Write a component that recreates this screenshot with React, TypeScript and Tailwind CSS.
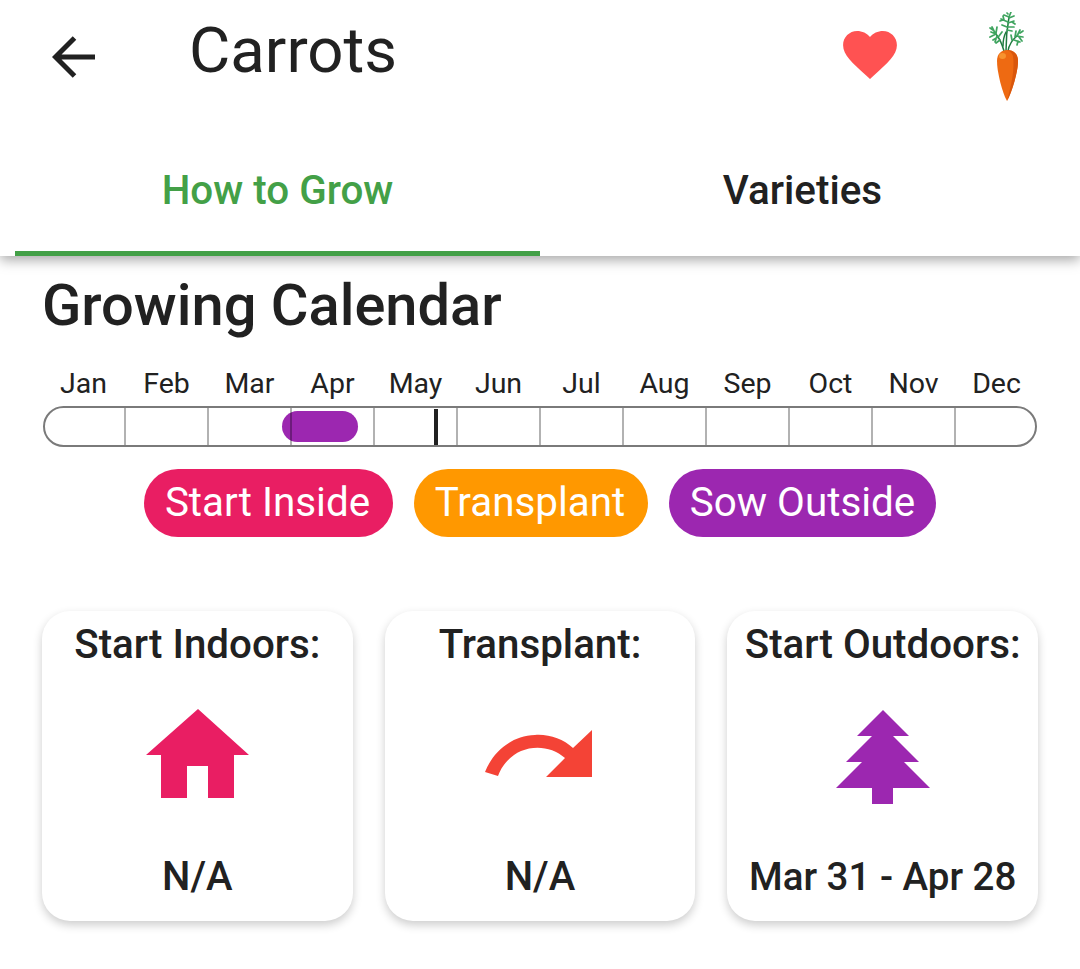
const months = ["Jan", "Feb", "Mar", "Apr", "May", "Jun", "Jul", "Aug", "Sep", "Oct", "Nov", "Dec"];

const CarrotIcon = () => (
  <svg width="36" height="90" viewBox="0 0 36 90" fill="none">
    {/* leaves */}
    <g stroke="#1f7a3f" strokeWidth="1.5" strokeLinecap="round">
      <path d="M15 39 C13 32 11 27 7 22" />
      <path d="M17 39 C17 28 18 16 20 5" />
      <path d="M19 39 C20 33 23 28 28 24" />
      <path d="M14 34 C14 28 15 24 17 20" />
    </g>
    <g stroke="#3fa45f" strokeWidth="1.7" strokeLinecap="round">
      <path d="M7 22 L1 25 M9 25 L4 28 M7 22 L2 20 M8 24 L6 30 M11 28 L7 31 M6 21 L3 15 M7 21 L8 15 M4 18 L1 16 M10 24 L13 20" />
      <path d="M20 5 L15 3 M20 5 L22 0 M20 6 L25 4 M19 10 L12 7 M14 8 L11 9 M15 8 L14 4 M19 11 L25 9 M23 10 L26 12 M18 15 L13 13 M19 15 L25 15 M18 18 L23 19 M19 2 L18 1" />
      <path d="M28 24 L34 25 M28 24 L31 18 M26 25 L27 19 M31 21 L34 19 M25 28 L31 30 M29 29 L28 33 M30 25 L33 29 M23 28 L22 23" />
    </g>
    {/* root */}
    <path d="M18 38 C25 38 29 42 29 49 C29 60 23 80 18 89 C13 80 8 60 8 49 C8 42 12 38 18 38 Z" fill="#ee6a12" />
    <path d="M18 38 C25 38 29 42 29 49 C29 60 23 80 18 89 C22 74 26 58 24 44 C23 41 21 39 18 38 Z" fill="#d9570d" />
    <ellipse cx="13.5" cy="44" rx="3.5" ry="3" fill="#f7932f" />
  </svg>
);

const HouseIcon = () => (
  <svg width="104" height="90" viewBox="0 0 104 90" className="mb-[6px] ml-[1px]">
    <path d="M52 0 L103 46 L88 46 L88 89 L62 89 L62 57 L41 57 L41 89 L15 89 L15 46 L0 46 Z" fill="#e91e63" />
  </svg>
);

const ArrowIcon = () => (
  <svg width="108" height="48" viewBox="0 0 108 48" className="mb-[7px] -ml-[1px]">
    <path d="M107 0 V47 H61 L80 28 C68 17 50 15 36 21 C25 26 17 35 13 46 L0 42 C7 24 24 6 50 5 C64 4 78 9 88 18 Z" fill="#f44336" />
  </svg>
);

const TreeIcon = () => (
  <svg width="94" height="94" viewBox="0 0 94 94">
    <path d="M47 0 L73 26 L57 26 L83 52 L68 52 L94 78 L57 78 L57 94 L36 94 L36 78 L0 78 L26 52 L10 52 L36 26 L21 26 Z" fill="#9c27b0" />
  </svg>
);

const cards = [
  { title: "Start Indoors:", icon: <HouseIcon />, date: "N/A", dateSize: "text-[40px]" },
  { title: "Transplant:", icon: <ArrowIcon />, date: "N/A", dateSize: "text-[40px]" },
  { title: "Start Outdoors:", icon: <TreeIcon />, date: "Mar 31 - Apr 28", dateSize: "text-[38.5px]" },
];

export default function App() {
  return (
    <div className="w-[1080px] h-[969px] bg-white overflow-hidden text-[#212121] font-['Roboto',sans-serif]">
      {/* App bar + tabs */}
      <header className="relative z-10 h-[256px] shadow-[0_4px_12px_rgba(0,0,0,0.35)] bg-white">
        <div className="flex items-center h-[102px] pl-[52px] pr-[55px]">
          <svg width="44" height="42" viewBox="0 0 44 42" fill="none" className="mt-[12px]">
            <path d="M43 21 H4 M22.5 2 L3.5 21 L22.5 40" stroke="#212121" strokeWidth="5" />
          </svg>
          <h1 className="ml-[93px] text-[63.5px] leading-none flex-1">Carrots</h1>
          <svg width="54" height="48" viewBox="0 0 24 21.4" className="mr-[92px] mt-[8px]">
            <path d="M12 21.4 L10.3 19.8 C4.1 14.2 0 10.5 0 6.3 C0 2.8 2.8 0 6.3 0 C8.4 0 10.7 1 12 2.7 C13.3 1 15.6 0 17.7 0 C21.2 0 24 2.8 24 6.3 C24 10.5 19.9 14.2 13.7 19.8 Z" fill="#ff5252" />
          </svg>
          <div className="mt-[11px]">
            <CarrotIcon />
          </div>
        </div>
        <div className="flex mx-[15px] h-[154px]">
          <div className="flex-1 border-b-[5px] border-[#43a047] flex items-center justify-center pt-[29px] text-[40.4px] font-medium text-[#43a047]">
            How to Grow
          </div>
          <div className="flex-1 border-b-[5px] border-transparent flex items-center justify-center pt-[29px] text-[40.4px] font-medium">
            Varieties
          </div>
        </div>
      </header>

      <main className="px-[43px]">
        <h2 className="mt-[17px] -ml-[1px] text-[57.8px] leading-[64px] font-medium">Growing Calendar</h2>

        {/* Calendar */}
        <div className="mt-[30px] -ml-[1px] grid grid-cols-[repeat(12,83px)] text-[28.5px] leading-[33px]">
          {months.map((m) => (
            <div key={m} className="text-center">{m}</div>
          ))}
        </div>
        <div className="relative mt-[6px] w-[994px] h-[41px] rounded-full border-2 border-[#7a7a7a] overflow-hidden">
          <div className="absolute left-[237px] top-[3px] w-[76px] h-[31px] rounded-full bg-[#9c27b0]" />
          <div className="absolute left-[389px] top-[1px] w-[4px] h-[36px] bg-[#212121]" />
          <div className="-ml-[2px] h-full grid grid-cols-[repeat(12,83px)]">
            {months.map((m, i) => (
              <div key={m} className={i < 11 ? "relative border-r-2 border-black/30" : ""} />
            ))}
          </div>
        </div>

        {/* Legend */}
        <div className="mt-[22px] flex justify-center gap-[21px] text-[40.4px] text-white">
          <span className="h-[68px] w-[249px] pr-[2px] flex items-center justify-center rounded-full bg-[#e91e63]">Start Inside</span>
          <span className="h-[68px] w-[234px] pr-[2px] flex items-center justify-center rounded-full bg-[#ff9800]">Transplant</span>
          <span className="h-[68px] w-[267px] flex items-center justify-center rounded-full bg-[#9c27b0]">Sow Outside</span>
        </div>

        {/* Cards */}
        <div className="mt-[74px] -mx-[1px] grid grid-cols-3 gap-[32px]">
          {cards.map((c) => (
            <div key={c.title} className="h-[310px] rounded-[28px] bg-white shadow-[0_4px_10px_rgba(0,0,0,0.2)] flex flex-col items-center pt-[11px] pb-[21px] font-medium leading-[46px]">
              <div className="whitespace-nowrap text-[40.3px]">{c.title}</div>
              <div className="flex-1 flex items-center justify-center pb-[8px]">{c.icon}</div>
              <div className={`whitespace-nowrap ${c.dateSize}`}>{c.date}</div>
            </div>
          ))}
        </div>
      </main>
    </div>
  );
}
